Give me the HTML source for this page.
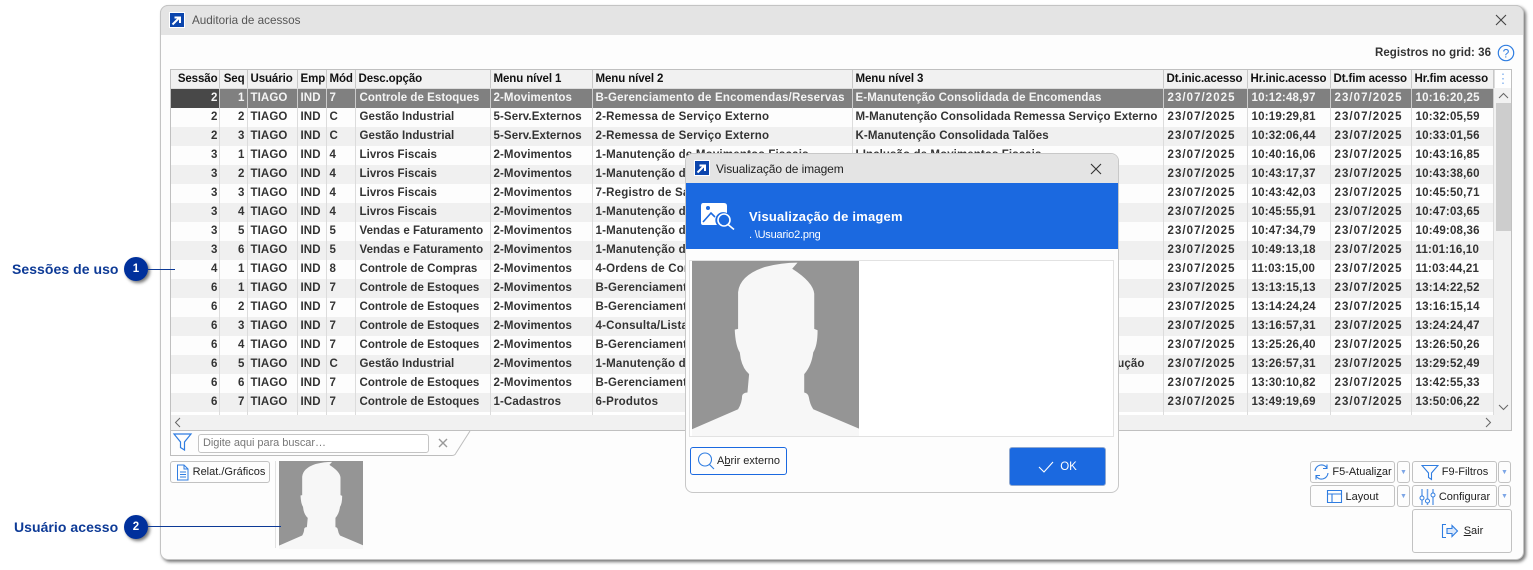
<!DOCTYPE html>
<html><head><meta charset="utf-8"><style>
*{box-sizing:border-box}
html,body{margin:0;padding:0;width:1533px;height:570px;overflow:hidden;background:#fff;font-family:"Liberation Sans",sans-serif;color:#222}
.a{position:absolute}
.win{left:160px;top:5px;width:1364px;height:555px;background:#fdfdfd;border:1px solid #c4c4c4;border-radius:8px;box-shadow:2px 2px 3px #777}
.tb{left:160px;top:5px;width:1364px;height:30px;background:#e4e4e4;border-radius:8px 8px 0 0;border:1px solid #c4c4c4;border-bottom:0}
.t{font-size:11.7px;color:#555}
table{position:absolute;left:170px;top:69px;border-collapse:collapse;table-layout:fixed;width:1323px;font-size:11.5px;font-weight:bold;letter-spacing:.1px}
td,th{height:19px;padding:0 3px;white-space:nowrap;overflow:hidden;border-right:1px solid #dcdcdc;text-align:left;line-height:18px;color:#333}
th{background:#f1f1f1;color:#111;border-right:1px solid #c8c8c8;border-top:1px solid #c0c0c0;border-bottom:1px solid #ddd;letter-spacing:-.1px}
tbody tr:nth-child(odd) td{background:#f0f0f0}
tbody tr:nth-child(18) td{background:#fff}
td.r,th.r{text-align:right}
td.n{text-align:right;padding-right:3px}
td.s{padding-left:4px}
td:nth-child(3),td:nth-child(4){padding-left:3px}
td:nth-child(1),th:nth-child(1){padding-right:1px}
td:nth-child(2),th:nth-child(2){padding-right:2px}
td:nth-child(6){letter-spacing:.05px}
td:nth-child(8){letter-spacing:.2px}
td:nth-child(10),td:nth-child(12){letter-spacing:1.05px}
td:nth-child(11),td:nth-child(13){letter-spacing:.2px}
tr.sel td{background:#808080!important;color:#f4f4f4;border-right:1px solid #ccc}
tr.sel td.f{background:#484848!important}
.btn{position:absolute;background:#fdfdfd;border:1px solid #c2c2c2;border-radius:3px;font-size:11px;color:#222;white-space:nowrap;display:flex;align-items:center;justify-content:center}
.dd{color:#7da6e6;font-size:7px}
.lab{font-size:14px;font-weight:bold;color:#0d3a96;white-space:nowrap;letter-spacing:.05px}
.bdg{width:24px;height:24px;border-radius:50%;background:#00309c;color:#fff;font-size:11.5px;font-weight:bold;text-align:center;line-height:24px;box-shadow:2px 2px 3px #777}
u{text-underline-offset:1px}
</style></head><body>
<div class="a win"></div><div class="a tb"></div>
<svg class="a" style="left:169px;top:12px" width="16" height="16"><rect width="16" height="16" fill="#fff"/><rect x="1" y="1" width="14" height="14" fill="#0b45ad"/><path d="M3.5 12.5L10 6M5.5 5.5H11V11" stroke="#fff" stroke-width="2" fill="none"/></svg>
<div class="a t" style="left:192px;top:14px">Auditoria de acessos</div>
<svg class="a" style="left:1495px;top:14px" width="12" height="12"><path d="M1 1L11 11M11 1L1 11" stroke="#444" stroke-width="1.1"/></svg>
<div class="a" style="left:1375px;top:47px;font-size:11.5px;font-weight:bold;color:#333;letter-spacing:.05px">Registros no grid: 36</div>
<svg class="a" style="left:1497px;top:44px" width="18" height="18"><circle cx="9" cy="9" r="7.7" fill="none" stroke="#2f7de1" stroke-width="1.2"/><text x="9" y="13.500" font-size="12" text-anchor="middle" fill="#2f7de1" font-family="Liberation Sans">?</text></svg>

<table>
<colgroup><col style="width:49px"><col style="width:28px"><col style="width:50px"><col style="width:29px"><col style="width:29px"><col style="width:135px"><col style="width:102px"><col style="width:260px"><col style="width:311px"><col style="width:84px"><col style="width:83px"><col style="width:81px"><col style="width:82px"></colgroup>
<thead><tr><th class="r">Sessão</th><th class="r">Seq</th><th>Usuário</th><th>Emp</th><th>Mód</th><th>Desc.opção</th><th>Menu nível 1</th><th>Menu nível 2</th><th>Menu nível 3</th><th>Dt.inic.acesso</th><th>Hr.inic.acesso</th><th>Dt.fim acesso</th><th>Hr.fim acesso</th></tr></thead>
<tbody>
<tr class="sel"><td class="n f">2</td><td class="n">1</td><td class="s">TIAGO</td><td class="s">IND</td><td>7</td><td class="s">Controle de Estoques</td><td>2-Movimentos</td><td>B-Gerenciamento de Encomendas/Reservas</td><td>E-Manutenção Consolidada de Encomendas</td><td class="s">23/07/2025</td><td class="s">10:12:48,97</td><td class="s">23/07/2025</td><td class="s">10:16:20,25</td></tr>
<tr><td class="n">2</td><td class="n">2</td><td class="s">TIAGO</td><td class="s">IND</td><td>C</td><td class="s">Gestão Industrial</td><td>5-Serv.Externos</td><td>2-Remessa de Serviço Externo</td><td>M-Manutenção Consolidada Remessa Serviço Externo</td><td class="s">23/07/2025</td><td class="s">10:19:29,81</td><td class="s">23/07/2025</td><td class="s">10:32:05,59</td></tr>
<tr><td class="n">2</td><td class="n">3</td><td class="s">TIAGO</td><td class="s">IND</td><td>C</td><td class="s">Gestão Industrial</td><td>5-Serv.Externos</td><td>2-Remessa de Serviço Externo</td><td>K-Manutenção Consolidada Talões</td><td class="s">23/07/2025</td><td class="s">10:32:06,44</td><td class="s">23/07/2025</td><td class="s">10:33:01,56</td></tr>
<tr><td class="n">3</td><td class="n">1</td><td class="s">TIAGO</td><td class="s">IND</td><td>4</td><td class="s">Livros Fiscais</td><td>2-Movimentos</td><td>1-Manutenção de Movimentos Fiscais</td><td>I-Inclusão de Movimentos Fiscais</td><td class="s">23/07/2025</td><td class="s">10:40:16,06</td><td class="s">23/07/2025</td><td class="s">10:43:16,85</td></tr>
<tr><td class="n">3</td><td class="n">2</td><td class="s">TIAGO</td><td class="s">IND</td><td>4</td><td class="s">Livros Fiscais</td><td>2-Movimentos</td><td>1-Manutenção de Movimentos Fiscais</td><td></td><td class="s">23/07/2025</td><td class="s">10:43:17,37</td><td class="s">23/07/2025</td><td class="s">10:43:38,60</td></tr>
<tr><td class="n">3</td><td class="n">3</td><td class="s">TIAGO</td><td class="s">IND</td><td>4</td><td class="s">Livros Fiscais</td><td>2-Movimentos</td><td>7-Registro de Saídas</td><td></td><td class="s">23/07/2025</td><td class="s">10:43:42,03</td><td class="s">23/07/2025</td><td class="s">10:45:50,71</td></tr>
<tr><td class="n">3</td><td class="n">4</td><td class="s">TIAGO</td><td class="s">IND</td><td>4</td><td class="s">Livros Fiscais</td><td>2-Movimentos</td><td>1-Manutenção de Movimentos Fiscais</td><td></td><td class="s">23/07/2025</td><td class="s">10:45:55,91</td><td class="s">23/07/2025</td><td class="s">10:47:03,65</td></tr>
<tr><td class="n">3</td><td class="n">5</td><td class="s">TIAGO</td><td class="s">IND</td><td>5</td><td class="s">Vendas e Faturamento</td><td>2-Movimentos</td><td>1-Manutenção de Pedidos</td><td></td><td class="s">23/07/2025</td><td class="s">10:47:34,79</td><td class="s">23/07/2025</td><td class="s">10:49:08,36</td></tr>
<tr><td class="n">3</td><td class="n">6</td><td class="s">TIAGO</td><td class="s">IND</td><td>5</td><td class="s">Vendas e Faturamento</td><td>2-Movimentos</td><td>1-Manutenção de Pedidos</td><td></td><td class="s">23/07/2025</td><td class="s">10:49:13,18</td><td class="s">23/07/2025</td><td class="s">11:01:16,10</td></tr>
<tr><td class="n">4</td><td class="n">1</td><td class="s">TIAGO</td><td class="s">IND</td><td>8</td><td class="s">Controle de Compras</td><td>2-Movimentos</td><td>4-Ordens de Compra</td><td></td><td class="s">23/07/2025</td><td class="s">11:03:15,00</td><td class="s">23/07/2025</td><td class="s">11:03:44,21</td></tr>
<tr><td class="n">6</td><td class="n">1</td><td class="s">TIAGO</td><td class="s">IND</td><td>7</td><td class="s">Controle de Estoques</td><td>2-Movimentos</td><td>B-Gerenciamento de Encomendas</td><td></td><td class="s">23/07/2025</td><td class="s">13:13:15,13</td><td class="s">23/07/2025</td><td class="s">13:14:22,52</td></tr>
<tr><td class="n">6</td><td class="n">2</td><td class="s">TIAGO</td><td class="s">IND</td><td>7</td><td class="s">Controle de Estoques</td><td>2-Movimentos</td><td>B-Gerenciamento de Encomendas</td><td></td><td class="s">23/07/2025</td><td class="s">13:14:24,24</td><td class="s">23/07/2025</td><td class="s">13:16:15,14</td></tr>
<tr><td class="n">6</td><td class="n">3</td><td class="s">TIAGO</td><td class="s">IND</td><td>7</td><td class="s">Controle de Estoques</td><td>2-Movimentos</td><td>4-Consulta/Listagem</td><td></td><td class="s">23/07/2025</td><td class="s">13:16:57,31</td><td class="s">23/07/2025</td><td class="s">13:24:24,47</td></tr>
<tr><td class="n">6</td><td class="n">4</td><td class="s">TIAGO</td><td class="s">IND</td><td>7</td><td class="s">Controle de Estoques</td><td>2-Movimentos</td><td>B-Gerenciamento de Encomendas</td><td></td><td class="s">23/07/2025</td><td class="s">13:25:26,40</td><td class="s">23/07/2025</td><td class="s">13:26:50,26</td></tr>
<tr><td class="n">6</td><td class="n">5</td><td class="s">TIAGO</td><td class="s">IND</td><td>C</td><td class="s">Gestão Industrial</td><td>2-Movimentos</td><td>1-Manutenção de Ordens</td><td style="text-align:right;padding-right:18px">Ordem de Produção</td><td class="s">23/07/2025</td><td class="s">13:26:57,31</td><td class="s">23/07/2025</td><td class="s">13:29:52,49</td></tr>
<tr><td class="n">6</td><td class="n">6</td><td class="s">TIAGO</td><td class="s">IND</td><td>7</td><td class="s">Controle de Estoques</td><td>2-Movimentos</td><td>B-Gerenciamento de Encomendas</td><td></td><td class="s">23/07/2025</td><td class="s">13:30:10,82</td><td class="s">23/07/2025</td><td class="s">13:42:55,33</td></tr>
<tr><td class="n">6</td><td class="n">7</td><td class="s">TIAGO</td><td class="s">IND</td><td>7</td><td class="s">Controle de Estoques</td><td>1-Cadastros</td><td>6-Produtos</td><td></td><td class="s">23/07/2025</td><td class="s">13:49:19,69</td><td class="s">23/07/2025</td><td class="s">13:50:06,22</td></tr>
<tr><td></td><td></td><td></td><td></td><td></td><td></td><td></td><td></td><td></td><td></td><td></td><td></td><td></td></tr>
</tbody></table>

<div class="a" style="left:170px;top:69px;width:1342px;height:362px;border:1px solid #c0c0c0;pointer-events:none"></div>
<div class="a" style="left:171px;top:415px;width:1340px;height:15px;background:#f1f1f1"></div>
<svg class="a" style="left:174px;top:417px" width="8" height="11"><path d="M6 1L1.5 5.500L6 10" stroke="#666" fill="none"/></svg>
<svg class="a" style="left:1484px;top:417px" width="8" height="11"><path d="M2 1L6.500 5.500L2 10" stroke="#666" fill="none"/></svg>
<div class="a" style="left:1494px;top:70px;width:17px;height:345px;background:#f1f1f1"></div>
<div class="a" style="left:1494px;top:70px;width:17px;height:18px;background:#fff;border-left:1px solid #ddd;color:#7fb0ee;font-size:13px;text-align:center;line-height:17px">⋮</div>
<svg class="a" style="left:1498px;top:92px" width="11" height="8"><path d="M1 6L5.500 1.500L10 6" stroke="#666" fill="none"/></svg>
<div class="a" style="left:1496px;top:103px;width:15px;height:128px;background:#cdcdcd"></div>
<svg class="a" style="left:1498px;top:403px" width="11" height="8"><path d="M1 2L5.500 6.500L10 2" stroke="#666" fill="none"/></svg>

<svg class="a" style="left:165px;top:428px" width="310" height="30"><path d="M5.500 3V27.500H287Q290 27.500 291 25L305 3" fill="none" stroke="#bdbdbd"/><path d="M9 4H26L19.500 12V20L15.500 17.500V12Z" transform="translate(0,2)" fill="none" stroke="#2f7de1" stroke-width="1.2"/></svg>
<div class="a" style="left:198px;top:434px;width:231px;height:19px;border:1px solid #c4c4c4;border-radius:3px;background:#fff;font-size:11px;color:#777;padding-left:4px;line-height:17px;letter-spacing:-.05px">Digite aqui para buscar…</div>
<svg class="a" style="left:438px;top:438px" width="10" height="10"><path d="M1 1L9 9M9 1L1 9" stroke="#999" stroke-width="1.4"/></svg>

<div class="btn" style="left:170px;top:461px;width:100px;height:22px"><svg width="15" height="17" style="margin-right:3px"><path d="M2.500 1H9L13 5V16H2.500ZM9 1V5H13M5 8H11M5 10.500H11M5 13H11" fill="none" stroke="#2f7de1" stroke-width="1"/></svg>Relat./Gráficos</div>
<div class="a" style="left:275px;top:461px;width:1px;height:87px;background:#e2e2e2"></div>
<svg class="a" style="left:279px;top:461px" width="84" height="88" viewBox="22 17 500 523" preserveAspectRatio="none"><rect x="22" y="17" width="500" height="523" fill="#959595"/><path d="M22 520L160 460Q172 440 172 420Q175 410 188 410L193 355Q175 340 168 310L165 290Q152 270 150 222L160 220L160 110Q165 60 240 35Q290 22 338 22L322 40Q385 80 388 115L388 220L398 224Q398 270 385 290Q380 330 358 355L358 410Q370 412 372 425Q375 445 385 460L522 518V540H22Z" fill="#f7f7f7"/></svg>

<div class="btn" style="left:1310px;top:461px;width:85px;height:22px"><svg width="17" height="18" style="margin-right:2px"><path d="M2 8A6.500 6.500 0 0 1 14 5M14 1.500V5.500H10M15 10A6.500 6.500 0 0 1 3 13M3 16.500V12.500H7" fill="none" stroke="#2f7de1" stroke-width="1.1"/></svg><span>F5-Atuali<u>z</u>ar</span></div>
<div class="btn dd" style="left:1397px;top:461px;width:13px;height:22px">▼</div>
<div class="btn" style="left:1412px;top:461px;width:85px;height:22px"><svg width="18" height="17" style="margin-right:3px"><path d="M1 1.500H17L10.500 9V15.500L7.500 13.500V9Z" fill="none" stroke="#2f7de1" stroke-width="1.1"/></svg>F9-Filtros</div>
<div class="btn dd" style="left:1498px;top:461px;width:13px;height:22px">▼</div>
<div class="btn" style="left:1310px;top:485px;width:85px;height:22px;padding-top:1px"><svg width="17" height="15" style="margin-right:2px"><path d="M1.500 1.500H15.500V13.500H1.500ZM1.500 5H15.500M6 5V13.500" fill="none" stroke="#2f7de1" stroke-width="1.1"/></svg>Layout</div>
<div class="btn dd" style="left:1397px;top:485px;width:13px;height:22px">▼</div>
<div class="btn" style="left:1412px;top:485px;width:85px;height:22px;padding-top:1px"><svg width="17" height="18" style="margin-right:3px"><path d="M3 1V17M8.500 1V17M14 1V17" stroke="#6ea4ea" stroke-width="1.500"/><circle cx="3" cy="10" r="2" fill="#fff" stroke="#2f7de1"/><circle cx="8.500" cy="13" r="2" fill="#fff" stroke="#2f7de1"/><circle cx="14" cy="7" r="2" fill="#fff" stroke="#2f7de1"/></svg>Configurar</div>
<div class="btn dd" style="left:1498px;top:485px;width:13px;height:22px">▼</div>
<div class="btn" style="left:1412px;top:509px;width:100px;height:44px"><svg width="18" height="16" style="margin-right:5px"><path d="M5 1.500H1.500V14.500H5" fill="none" stroke="#2f7de1" stroke-width="1.1"/><path d="M6 5.500H11V2.500L16.500 8L11 13.500V10.500H6Z" fill="#dbe8fa" stroke="#2f7de1" stroke-width="1.1"/></svg><span><u>S</u>air</span></div>

<div class="a lab" style="left:12px;top:261px">Sessões de uso</div>
<div class="a bdg" style="left:124px;top:257px">1</div>
<div class="a" style="left:148px;top:269px;width:27px;height:1px;background:#0d3a96"></div>
<div class="a lab" style="left:14px;top:519px">Usuário acesso</div>
<div class="a bdg" style="left:124px;top:515px">2</div>
<div class="a" style="left:148px;top:526px;width:133px;height:1px;background:#0d3a96"></div>

<div class="a" style="left:685px;top:153px;width:434px;height:340px;background:#fdfdfd;border:1px solid #c8c8c8;border-radius:8px"></div>
<div class="a" style="left:686px;top:154px;width:432px;height:29px;background:#e4e4e4;border-radius:7px 7px 0 0"></div>
<svg class="a" style="left:694px;top:160px" width="16" height="16"><rect width="16" height="16" fill="#fff"/><rect x="1" y="1" width="14" height="14" fill="#0b45ad"/><path d="M3.500 12.500L10 6M5.500 5.500H11V11" stroke="#fff" stroke-width="2" fill="none"/></svg>
<div class="a" style="left:716px;top:162px;font-size:12px;color:#222;letter-spacing:-.1px">Visualização de imagem</div>
<svg class="a" style="left:1090px;top:163px" width="12" height="12"><path d="M1 1L11 11M11 1L1 11" stroke="#333" stroke-width="1.1"/></svg>
<div class="a" style="left:686px;top:183px;width:432px;height:66px;background:#1b69e0"></div>
<svg class="a" style="left:700px;top:202px" width="36" height="28"><path d="M3 1H24Q27 1 27 4V11A8 8 0 0 0 17 23H3Q1 23 1 21V4Q1 1 3 1Z" fill="#fff"/><circle cx="8" cy="6" r="2" fill="#1b69e0"/><path d="M3 20L11 11L15 15" stroke="#1b69e0" stroke-width="1.600" fill="none"/><circle cx="24" cy="18" r="6" fill="none" stroke="#fff" stroke-width="1.600"/><path d="M28 22.500L34 27.500" stroke="#fff" stroke-width="1.600"/></svg>
<div class="a" style="left:749px;top:209px;font-size:13px;font-weight:bold;color:#fff;letter-spacing:.2px">Visualização de imagem</div>
<div class="a" style="left:749px;top:229px;font-size:11px;color:#fff;letter-spacing:-.2px">. \Usuario2.png</div>
<div class="a" style="left:689px;top:260px;width:425px;height:177px;border:1px solid #e2e2e2;background:#fff"></div>
<svg class="a" style="left:692px;top:261px" width="167" height="175" viewBox="22 17 500 523" preserveAspectRatio="none"><rect x="22" y="17" width="500" height="523" fill="#959595"/><path d="M22 520L160 460Q172 440 172 420Q175 410 188 410L193 355Q175 340 168 310L165 290Q152 270 150 222L160 220L160 110Q165 60 240 35Q290 22 338 22L322 40Q385 80 388 115L388 220L398 224Q398 270 385 290Q380 330 358 355L358 410Q370 412 372 425Q375 445 385 460L522 518V540H22Z" fill="#f7f7f7"/></svg>
<div class="btn" style="left:690px;top:447px;width:97px;height:28px;border-color:#1b69e0"><svg width="18" height="20" style="margin-right:2px"><circle cx="8" cy="8.500" r="6.500" fill="none" stroke="#2f7de1" stroke-width="1.100"/><path d="M12.500 13.500L17 18" stroke="#2f7de1" stroke-width="1.100"/></svg><span>A<u>b</u>rir externo</span></div>
<div class="btn" style="left:1009px;top:447px;width:97px;height:39px;background:#1b69e0;border-color:#8fa8d0;color:#fff;font-size:11.5px"><svg width="16" height="12" style="margin-right:6px"><path d="M1 6L6 11L15 1" stroke="#fff" fill="none" stroke-width="1.100"/></svg>OK</div>
</body></html>
